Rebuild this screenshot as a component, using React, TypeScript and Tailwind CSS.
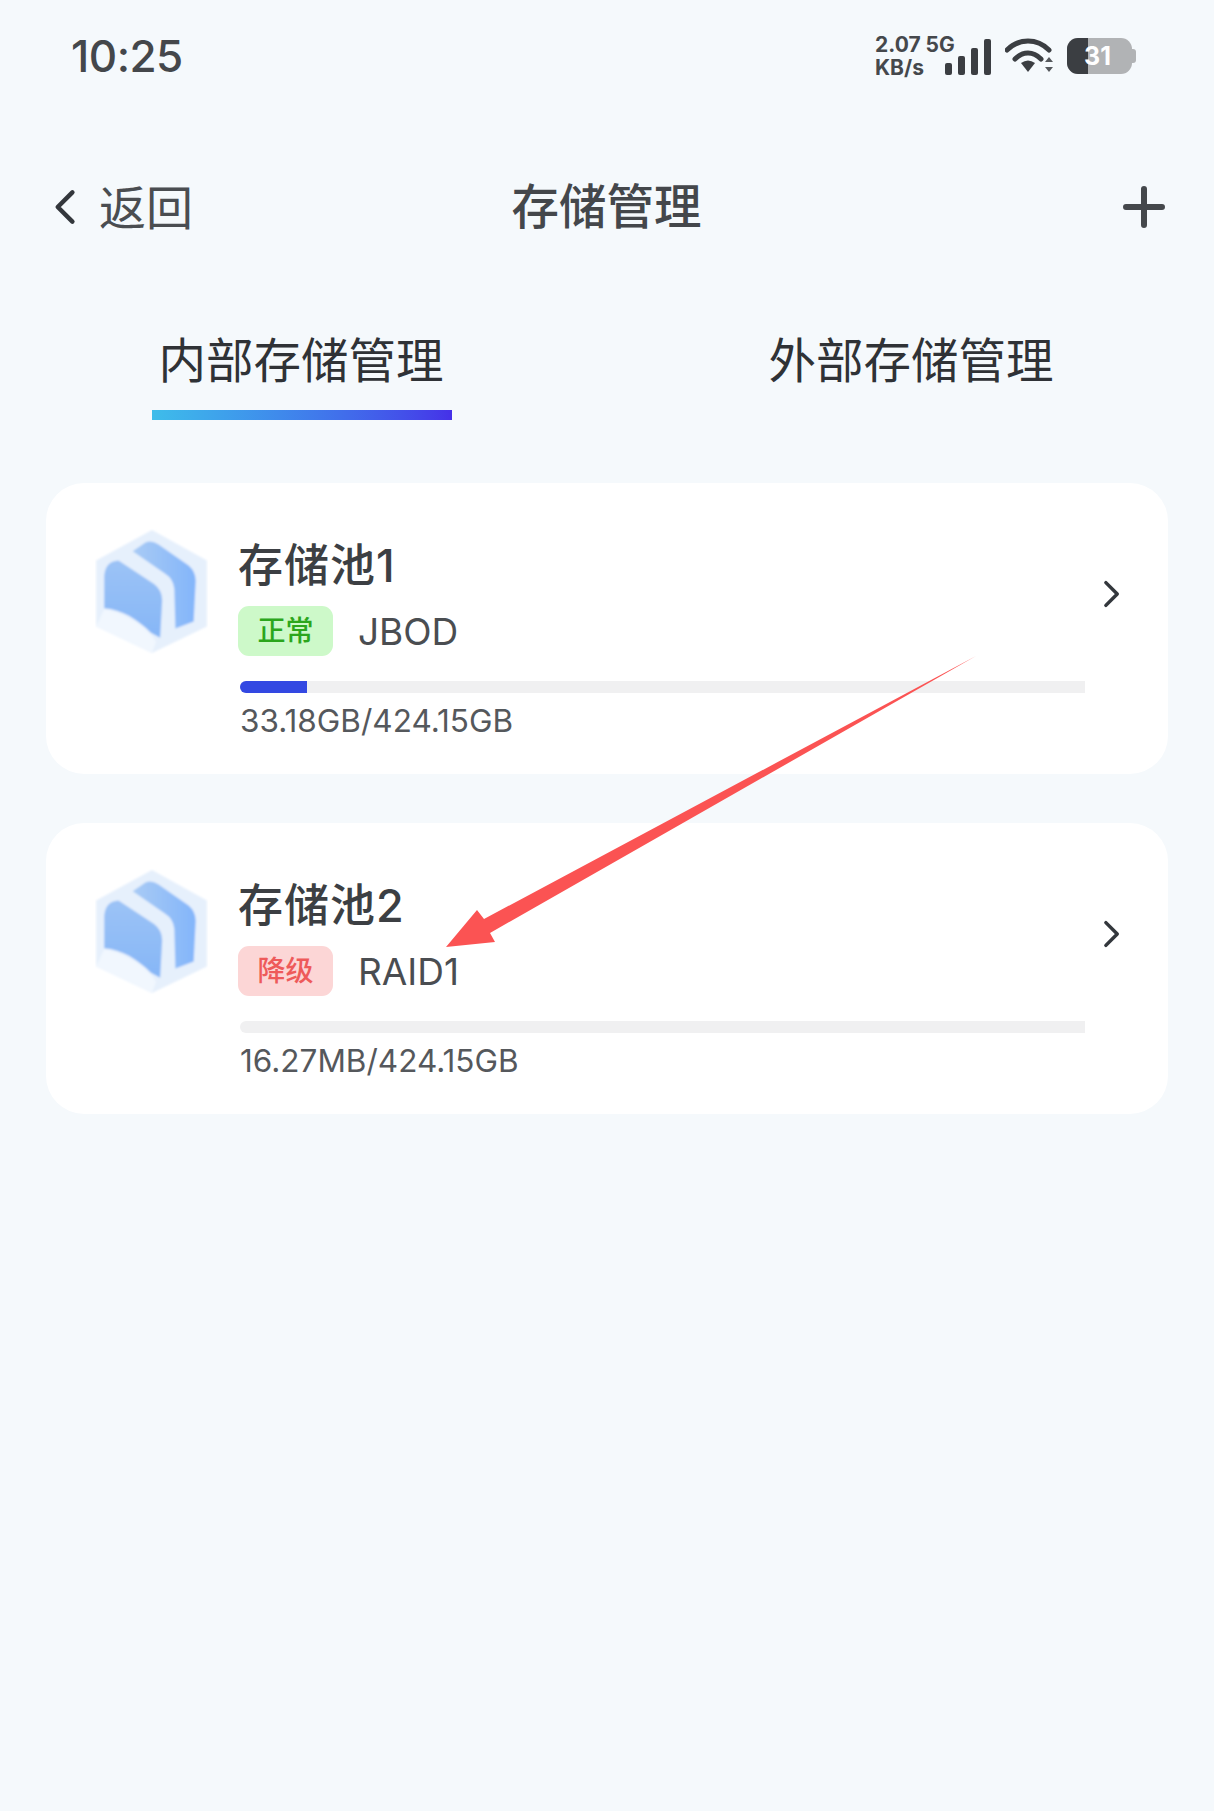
const font = "font-['Inter','Noto_Sans_CJK_SC',sans-serif]";

const HexIcon = ({ id }: { id: string }) => (
  <svg width="113" height="127" viewBox="0 0 111 125" className="ml-[-1px] mt-[-1px] shrink-0">
    <defs>
      <linearGradient id={`${id}-front`} x1="0" y1="0" x2="0" y2="1">
        <stop offset="0" stopColor="#9cc3f6" />
        <stop offset="1" stopColor="#86b6f7" />
      </linearGradient>
      <linearGradient id={`${id}-back`} x1="0" y1="0" x2="1" y2="0">
        <stop offset="0" stopColor="#a9cbf5" />
        <stop offset="1" stopColor="#83b5fa" />
      </linearGradient>
      <filter id={`${id}-soft`}>
        <feGaussianBlur stdDeviation="1.2" />
      </filter>
    </defs>
    <g filter={`url(#${id}-soft)`}>
      <path d="M56 2 L110 32 V97 L56 123 L1 97 V32 Z" fill="#e6f0fc" />
      <path d="M56 123 L1 97 L9 80 C30 84 50 96 60 112 Z" fill="#f1f7fe" />
      <path
        d="M37 23 L50 14 Q56 12 62 16 L92 37 Q99 43 99 52 L97 92 L79 99 L78 60 Q77 50 69 45 Z"
        fill={`url(#${id}-back)`}
      />
      <path
        d="M9 47 Q10 33 23 32 L58 55 Q66 61 66 71 L64 108 L55 103 C42 90 26 80 9 79 Z"
        fill={`url(#${id}-front)`}
      />
    </g>
  </svg>
);

const Chevron = ({ dir, className }: { dir: "left" | "right"; className: string }) => (
  <svg viewBox="0 0 20 32" className={className} fill="none" stroke="#33373c" strokeWidth="4" strokeLinecap="round" strokeLinejoin="round">
    <path d={dir === "left" ? "M17 3 L4 16 L17 29" : "M3 3 L16 16 L3 29"} />
  </svg>
);

const pools = [
  {
    id: "a",
    name: "存储池1",
    status: "正常",
    badge: "bg-[#cdf9c9] text-[#2ba61c]",
    kind: "JBOD",
    used: "33.18GB/424.15GB",
    fill: "w-[67px]",
  },
  {
    id: "b",
    name: "存储池2",
    status: "降级",
    badge: "bg-[#fcd6d6] text-[#ee5a5a]",
    kind: "RAID1",
    used: "16.27MB/424.15GB",
    fill: "w-0",
  },
];

export default function App() {
  return (
    <div className={`${font} relative min-h-[1811px] w-full overflow-hidden bg-[#f5f9fc] text-[#3a3d41]`}>
      {/* status bar */}
      <div className="flex h-[112px] items-center justify-between pl-[71px] pr-[78px]">
        <span className="text-[44px] font-medium leading-none tracking-[-0.5px] text-[#44474b]">10:25</span>
        <div className="flex items-center">
          <div className="ml-[-2px] w-[83px] text-[21px] font-bold leading-[23px] text-[#45484c]">
            <div className="whitespace-nowrap">2.07 5G</div>
            <div>KB/s</div>
          </div>
          <svg width="46" height="36" viewBox="0 0 46 36" className="ml-[-13px] mt-[2px]" fill="#3b3e42">
            <rect x="0" y="24" width="7" height="12" rx="2" />
            <rect x="13" y="17" width="7" height="19" rx="2" />
            <rect x="26" y="9" width="7" height="27" rx="2" />
            <rect x="39" y="0" width="7" height="36" rx="2" />
          </svg>
          <svg width="50" height="36" viewBox="0 0 50 36" className="ml-[14px]" fill="none" stroke="#3b3e42" strokeLinecap="round">
            <path d="M2 12 C14 0 32 0 44 12" strokeWidth="5" />
            <path d="M10 21 C18 13 28 13 36 21" strokeWidth="5" />
            <path d="M16 25 Q23 20 30 25 L23 34 Z" fill="#3b3e42" stroke="none" />
            <path d="M40 24 L44 19 L48 24 Z M40 29 L48 29 L44 34 Z" fill="#55585c" stroke="none" />
          </svg>
          <div className="relative ml-[12px] flex items-center">
            <div className="flex h-[36px] w-[65px] overflow-hidden rounded-[11px] bg-[#b1b3b5]">
              <div className="w-[21px] bg-[#3b3e42]" />
            </div>
            <div className="h-[14px] w-[4px] rounded-r-[3px] bg-[#b1b3b5]" />
            <span className="absolute left-[17px] top-[5px] text-[25px] font-bold leading-[26px] text-white">31</span>
          </div>
        </div>
      </div>

      {/* nav */}
      <div className="mt-[55px] grid h-[80px] grid-cols-3 items-center pl-[53px] pr-[49px]">
        <div className="flex items-center gap-[23px]">
          <Chevron dir="left" className="h-[36px] w-[23px]" />
          <span className="text-[47px] leading-none text-[#4a4d51]">返回</span>
        </div>
        <div className="whitespace-nowrap pr-[5px] text-center text-[47.5px] font-medium leading-none text-[#44474b]">存储管理</div>
        <div className="flex justify-end">
          <svg width="42" height="42" viewBox="0 0 42 42" stroke="#45484c" strokeWidth="6" strokeLinecap="round">
            <path d="M21 3 V39 M3 21 H39" />
          </svg>
        </div>
      </div>

      {/* tabs */}
      <div className="mt-[86px] flex pl-[152px]">
        <div className="w-[300px]">
          <div className="whitespace-nowrap pr-[2px] text-center text-[47.5px] leading-[56px] text-[#2f3236]">内部存储管理</div>
          <div className="mt-[21px] h-[10px] bg-gradient-to-r from-[#3ebdea] to-[#4530e8]" />
        </div>
        <div className="ml-[310px] w-[300px] whitespace-nowrap pr-[2px] text-center text-[47.5px] leading-[56px] text-[#2f3236]">外部存储管理</div>
      </div>

      {/* pools */}
      <div className="mt-[63px] flex flex-col gap-[49px] px-[46px]">
        {pools.map((p) => (
          <div key={p.id} className="flex h-[291px] rounded-[38px] bg-white pl-[50px] pt-[46px]">
            <HexIcon id={p.id} />
            <div className="ml-[30px] w-[847px] pt-[12px]">
              <div className="text-[45px] font-medium leading-[50px] tracking-[1px] text-[#3c3f43]">{p.name}</div>
              <div className="mt-[15px] flex h-[50px] items-center">
                <div className={`${p.badge} flex h-[50px] w-[95px] items-center justify-center rounded-[11px] text-[28px] font-medium`}>
                  {p.status}
                </div>
                <span className="ml-[25px] text-[37px] leading-none text-[#4a4d51]">{p.kind}</span>
              </div>
              <div className="ml-[2px] mt-[25px] h-[12px] overflow-hidden rounded-l-full bg-[#f0f0f1]">
                <div className={`${p.fill} h-full bg-[#3348e2]`} />
              </div>
              <div className="mt-[10px] pl-[2px] text-[31.5px] leading-[36px] text-[#55585c]">{p.used}</div>
            </div>
            <Chevron dir="right" className="ml-[18px] mt-[51px] h-[28px] w-[18px]" />
          </div>
        ))}
      </div>

      {/* annotation arrow */}
      <svg className="absolute left-0 top-0 pointer-events-none" width="1214" height="1811" viewBox="0 0 1214 1811">
        <path d="M976 656 L484 919 L477 910 L446 947 L495 942 L490 933 Z" fill="#fb5353" />
      </svg>
    </div>
  );
}
